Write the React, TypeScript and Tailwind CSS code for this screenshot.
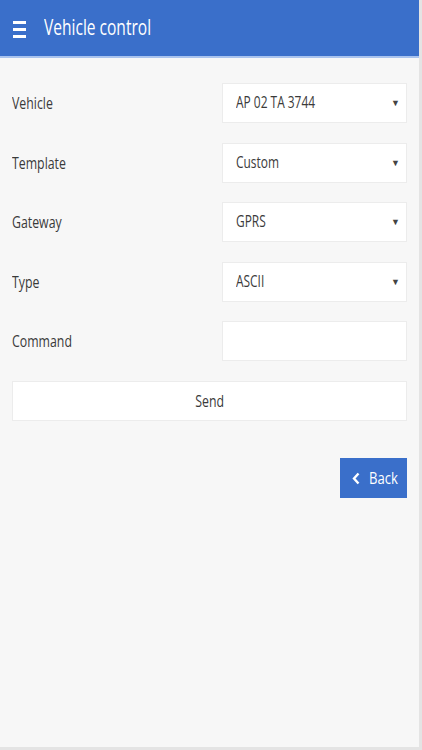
import { ReactNode } from 'react';

function Cond({ children, center, tight }: { children: ReactNode; center?: boolean; tight?: boolean }) {
  return (
    <span
      className={`inline-block whitespace-nowrap ${tight ? 'scale-x-[0.74]' : 'scale-x-[0.77]'} ${center ? 'origin-center' : 'origin-left'}`}
    >
      {children}
    </span>
  );
}

function SelectBox({ value }: { value?: string }) {
  return (
    <div className="w-[185px] h-[40px] bg-white border border-[#ececec] flex items-center justify-between pl-[13px] pr-[6px] text-[15.5px] text-[#3a3a3a]">
      <Cond>{value}</Cond>
      <span className="text-[9px] text-[#444]">▼</span>
    </div>
  );
}

const rows = [
  { label: 'Vehicle', value: 'AP 02 TA 3744' },
  { label: 'Template', value: 'Custom' },
  { label: 'Gateway', value: 'GPRS' },
  { label: 'Type', value: 'ASCII' },
];

export default function App() {
  return (
    <div className="w-[422px] h-[750px] bg-[#f7f7f7] border-r-[3px] border-b-[3px] border-[#e4e4e4] flex flex-col" style={{ fontFamily: '"Open Sans", sans-serif' }}>
      <div className="h-[58px] bg-[#3a6fca] border-b-2 border-[#a9c3ee] flex items-center pl-[13px] gap-[18px] shrink-0">
        <div className="flex flex-col gap-[4px] mt-[2px]">
          <div className="w-[13px] h-[3px] bg-white" />
          <div className="w-[13px] h-[3px] bg-white" />
          <div className="w-[13px] h-[3px] bg-white" />
        </div>
        <span className="text-white text-[21px] -mt-[1px]"><Cond tight>Vehicle control</Cond></span>
      </div>

      <div className="px-[12px] pt-[25px] flex flex-col gap-[19.5px]">
        {rows.map((r) => (
          <div key={r.label} className="flex items-center justify-between">
            <span className="text-[16px] text-[#3a3a3a]"><Cond>{r.label}</Cond></span>
            <SelectBox value={r.value} />
          </div>
        ))}
        <div className="flex items-center justify-between">
          <span className="text-[16px] text-[#3a3a3a]"><Cond>Command</Cond></span>
          <div className="w-[185px] h-[40px] bg-white border border-[#ececec]" />
        </div>
        <div className="h-[40px] bg-white border border-[#ececec] flex items-center justify-center text-[16px] text-[#3a3a3a]">
          <Cond center>Send</Cond>
        </div>
        <div className="flex justify-end mt-[18px]">
          <div className="w-[67px] h-[40px] bg-[#3a6fca] text-white flex items-center justify-center gap-[9px] text-[17px] pl-[2px]">
            <svg width="8" height="13" viewBox="0 0 8 13" fill="none">
              <path d="M6.5 1.5 L2 6.5 L6.5 11.5" stroke="white" strokeWidth="2.4" />
            </svg>
            <span className="w-[28px]"><Cond>Back</Cond></span>
          </div>
        </div>
      </div>
    </div>
  );
}
